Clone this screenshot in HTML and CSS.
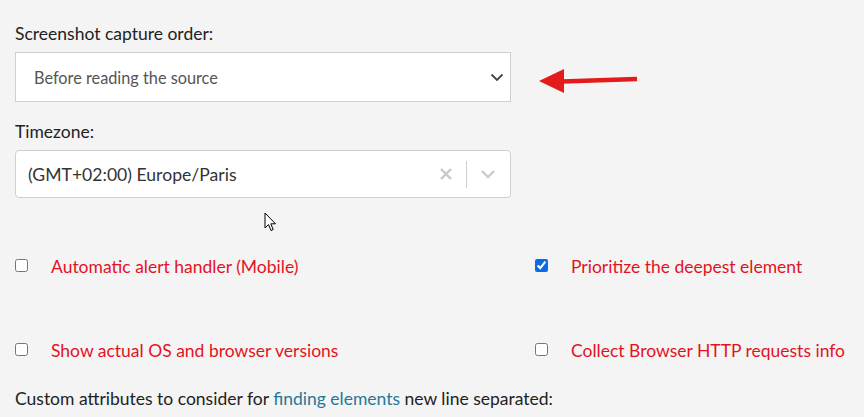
FILE: index.html
```html
<!DOCTYPE html>
<html>
<head>
<meta charset="utf-8">
<link rel="stylesheet" href="styles.css">
</head>
<body>
<div class="page">
  <div class="field-label first">Screenshot capture order:</div>
  <div class="select-row">
    <div class="select plain">
      <span class="select-value muted">Before reading the source</span>
      <svg class="chev dark" width="14" height="9" viewBox="0 0 14 9"><path d="M1.5 1.5 L7 7 L12.5 1.5" fill="none" stroke="#444" stroke-width="1.8"/></svg>
    </div>
    <svg class="pointer-arrow" width="100" height="26" viewBox="0 0 100 26">
      <path d="M1 13 L26 1 L26 25 Z" fill="#e31b1b"/>
      <path d="M24 13.5 L99 11" stroke="#e31b1b" stroke-width="4.5" fill="none"/>
    </svg>
  </div>

  <div class="field-label second">Timezone:</div>
  <div class="select rounded">
    <span class="select-value">(GMT+02:00) Europe/Paris</span>
    <div class="indicators">
      <svg class="clear" width="14" height="14" viewBox="0 0 14 14"><path d="M2 2 L12 12 M12 2 L2 12" stroke="#c8c8c8" stroke-width="2.4" fill="none"/></svg>
      <span class="sep"></span>
      <svg class="chev light" width="16" height="10" viewBox="0 0 16 10"><path d="M2 2 L8 8 L14 2" fill="none" stroke="#cccccc" stroke-width="2.4"/></svg>
    </div>
  </div>

  <div class="checks">
    <label class="check"><input type="checkbox"><span>Automatic alert handler (Mobile)</span></label>
    <label class="check"><input type="checkbox" checked><span>Prioritize the deepest element</span></label>
    <label class="check"><input type="checkbox"><span>Show actual OS and browser versions</span></label>
    <label class="check"><input type="checkbox"><span>Collect Browser HTTP requests info</span></label>
  </div>

  <div class="field-label third">Custom attributes to consider for <a class="link" href="#">finding elements</a> new line separated:</div>

  <svg class="cursor" width="13" height="21" viewBox="0 0 13 21"><path d="M1 1 L1 16 L4.5 12.5 L7 18.5 L9.2 17.5 L6.8 11.8 L11.5 11.8 Z" fill="#fff" stroke="#000" stroke-width="1"/></svg>
</div>
</body>
</html>
```

FILE: styles.css
```css
html, body {
  margin: 0;
  padding: 0;
  background: #f4f4f4;
}
body {
  font-family: Lato, "Open Sans", sans-serif;
  color: #222;
  font-size: 17.5px;
}
.page {
  position: relative;
  padding: 0 15px;
  height: 417px;
  overflow: hidden;
}
.field-label {
  line-height: 24px;
  font-size: 17.5px;
  color: #222;
}
.field-label.first { padding-top: 22px; margin-bottom: 6px; }
.field-label.second { margin-top: 18px; margin-bottom: 6px; }
.field-label.third { margin-top: 18px; }
.select-row {
  display: flex;
  align-items: flex-start;
}
.select {
  box-sizing: border-box;
  width: 496px;
  background: #fff;
  border: 1px solid #cfcfcf;
  display: flex;
  align-items: center;
}
.select.plain {
  height: 50px;
  padding: 0 0 0 18px;
}
.select.rounded {
  height: 48px;
  border-radius: 4px;
  padding: 0 0 0 12px;
}
.select-value {
  flex: 1;
  font-size: 17.6px;
  color: #333;
}
.select-value.muted {
  font-size: 16.3px;
  color: #555;
}
.chev.dark {
  margin-right: 6px;
}
.pointer-arrow {
  margin-left: 27px;
  margin-top: 16px;
}
.indicators {
  display: flex;
  align-items: center;
  height: 100%;
}
.clear { margin-right: 13px; }
.sep {
  width: 1px;
  height: 27px;
  background: #d0d0d0;
  margin-right: 13px;
}
.chev.light { margin-right: 14px; }
.checks {
  display: grid;
  grid-template-columns: 520px 1fr;
  row-gap: 44px;
  margin-top: 47px;
}
.check {
  display: flex;
  align-items: center;
  height: 40px;
  color: #e2131f;
  font-size: 17.5px;
}
.check input {
  margin: 0 23px 0 0;
  width: 13px;
  height: 13px;
  accent-color: #0b6be6;
}
.check span { position: relative; top: 1px; }
.link {
  color: #24789a;
  text-decoration: none;
}
.cursor {
  position: absolute;
  left: 264px;
  top: 212px;
}
```
